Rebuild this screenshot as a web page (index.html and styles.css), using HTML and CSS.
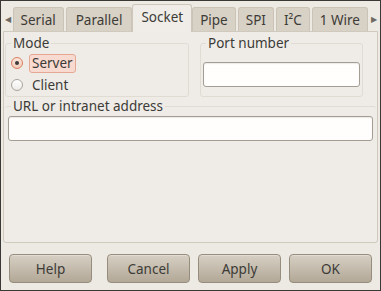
FILE: index.html
```html
<!DOCTYPE html>
<html lang="en">
<head>
    <meta charset="UTF-8">
    <title>Connection settings</title>
    <link rel="stylesheet" href="styles.css">
</head>
<body>
    <div class="window">
        <div class="tabbar">
            <span class="arrow">&#9664;</span>
            <div class="tab">Serial</div>
            <div class="tab wide">Parallel</div>
            <div class="tab active">Socket</div>
            <div class="tab">Pipe</div>
            <div class="tab">SPI</div>
            <div class="tab">I²C</div>
            <div class="tab">1 Wire</div>
            <span class="arrow right">&#9654;</span>
        </div>
        <div class="panel">
            <div class="row">
                <fieldset class="frame mode">
                    <legend>Mode</legend>
                    <div class="radio-row">
                        <span class="radio checked"></span>
                        <span class="radio-label focus">Server</span>
                    </div>
                    <div class="radio-row">
                        <span class="radio"></span>
                        <span class="radio-label">Client</span>
                    </div>
                </fieldset>
                <fieldset class="frame port">
                    <legend>Port number</legend>
                    <div class="entry"></div>
                </fieldset>
            </div>
            <fieldset class="frame url">
                <legend>URL or intranet address</legend>
                <div class="entry"></div>
            </fieldset>
        </div>
        <div class="buttons">
            <button class="btn help">Help</button>
            <button class="btn">Cancel</button>
            <button class="btn">Apply</button>
            <button class="btn">OK</button>
        </div>
    </div>
</body>
</html>
```

FILE: styles.css
```css
body {
    margin: 0;
    padding: 0;
    font-family: 'Noto Sans', sans-serif;
    font-size: 13.5px;
    color: #3c3b37;
}
.window {
    width: 381px;
    height: 291px;
    box-sizing: border-box;
    border: 1px solid #3a3935;
    background-color: #edeae4;
    padding: 2px 2px 0 2px;
}
.tabbar {
    display: flex;
    align-items: flex-end;
    height: 28px;
}
.arrow {
    width: 19px;
    font-size: 8px;
    color: #6e6a63;
    text-align: center;
    align-self: center;
    padding-top: 2px;
}
.arrow.right {
    margin-left: auto;
    width: 16px;
}
.tab {
    height: 23px;
    line-height: 24px;
    padding: 0 7px;
    margin-right: 2px;
    background-color: #d8d1c5;
    border: 1px solid #cbc3b5;
    border-bottom: none;
    border-radius: 3px 3px 0 0;
    color: #3c3b37;
    white-space: nowrap;
}
.tab.wide {
    padding: 0 9px;
}
.tab.active {
    height: 27px;
    line-height: 24px;
    padding: 0 8px;
    margin: 0 0 -1px -2px;
    background-color: #f0ede8;
    border-color: #cdc7bc;
    position: relative;
    z-index: 1;
}
.panel {
    height: 212px;
    box-sizing: border-box;
    border: 1px solid #cfc9be;
    border-radius: 0 0 3px 3px;
    background-color: #efece7;
    padding: 2px 1px;
}
.row {
    display: flex;
    gap: 11px;
}
.frame {
    margin: 0;
    border: 1px solid #e0dbd3;
    border-radius: 3px;
    padding: 0 2px 4px 2px;
}
.frame legend {
    padding: 0 2px;
    margin-left: 3px;
    color: #3c3b37;
}
.mode {
    width: 184px;
    box-sizing: border-box;
    height: 63px;
}
.port {
    width: 163px;
    box-sizing: border-box;
    height: 63px;
}
.radio-row {
    display: flex;
    align-items: center;
    height: 22px;
}
.radio {
    width: 12px;
    height: 12px;
    box-sizing: border-box;
    border-radius: 50%;
    border: 1px solid #a9a49c;
    background: linear-gradient(#ffffff, #ecebe8);
    margin-left: 3px;
    margin-right: 6px;
    position: relative;
}
.radio.checked {
    border-color: #d8805e;
    background: linear-gradient(#fbe5dc, #f4cdbd);
}
.radio.checked::after {
    content: "";
    position: absolute;
    left: 3px;
    top: 3px;
    width: 4px;
    height: 4px;
    border-radius: 50%;
    background-color: #3c3b37;
}
.radio-label {
    padding: 0 2px;
    line-height: 17px;
    border: 1px solid transparent;
}
.radio-label.focus {
    background-color: #f8dad0;
    border-color: #e5a895;
    border-radius: 3px;
}
.entry {
    height: 25px;
    box-sizing: border-box;
    border: 1px solid #a39d94;
    border-radius: 3px;
    background-color: #fffefc;
    box-shadow: inset 0 1px 1px rgba(0, 0, 0, 0.08);
}
.port .entry {
    margin-top: 10px;
}
.url {
    margin-top: 0;
    padding: 1px 3px 8px 3px;
    border-left: none;
    border-right: none;
    border-bottom: none;
}
.buttons {
    display: flex;
    gap: 8px;
    padding: 11px 6px 0 6px;
}
.btn {
    width: 83px;
    height: 29px;
    border: 1px solid #978d7e;
    border-radius: 4px;
    background: linear-gradient(#d6cfc3, #b3a897);
    font-family: 'Noto Sans', sans-serif;
    font-size: 13.5px;
    color: #3c3b37;
    cursor: pointer;
    box-shadow: inset 0 1px 0 rgba(255, 255, 255, 0.3);
}
.btn.help {
    margin-right: auto;
}
```
